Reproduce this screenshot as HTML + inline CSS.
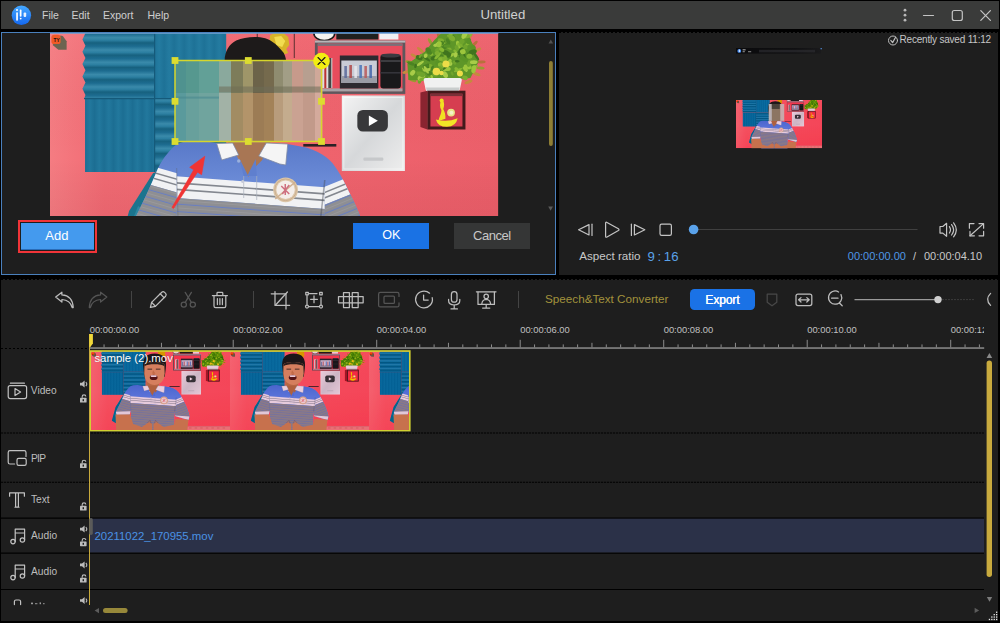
<!DOCTYPE html>
<html lang="en">
<head>
<meta charset="utf-8">
<title>Untitled</title>
<style>
html,body{margin:0;padding:0;}
body{width:1000px;height:623px;background:#000;overflow:hidden;position:relative;font-family:"Liberation Sans",sans-serif;color:#c8c8c8;}
.abs{position:absolute;}
.t{position:absolute;white-space:nowrap;line-height:1;}
#titlebar{left:1px;top:1px;width:998px;height:28px;background:#3a3b3a;}
#lpanel{left:1px;top:32px;width:555px;height:243px;background:#1e1e1e;box-sizing:border-box;border:1px solid #4a80bd;}
#rpanel{left:559px;top:32px;width:439px;height:243px;background:#1e1e1e;}
#lower{left:1px;top:279px;width:997px;height:342px;background:#1e1e1e;}
.menu{font-size:10.5px;color:#cfcfcf;top:10px;}
.sep{position:absolute;width:1px;background:#444;top:291px;height:17px;}
.rowline{position:absolute;left:1px;width:983px;height:1px;background:#000;}
.lbl{font-size:10.2px;color:#bdbdbd;}
svg{position:absolute;overflow:visible;}
.ic{fill:none;stroke:#bdbdbd;stroke-width:1.3;stroke-linecap:round;stroke-linejoin:round;}
.dim{stroke:#555;}
</style>
</head>
<body>
<!-- SCENE SYMBOLS -->
<svg width="0" height="0" style="position:absolute">
<defs>

<linearGradient id="wall" x1="50" y1="0" x2="498" y2="0" gradientUnits="userSpaceOnUse"><stop offset="0" stop-color="#f57c82"/><stop offset=".12" stop-color="#f16a73"/><stop offset=".6" stop-color="#ef636d"/><stop offset="1" stop-color="#ec5f6a"/></linearGradient>
<linearGradient id="wallv" x1="0" y1="33" x2="0" y2="285" gradientUnits="userSpaceOnUse"><stop offset="0" stop-color="#fff" stop-opacity=".04"/><stop offset=".5" stop-color="#000" stop-opacity="0"/><stop offset="1" stop-color="#a00020" stop-opacity=".12"/></linearGradient>
<linearGradient id="hs" x1="0" y1="34" x2="0" y2="46.3" gradientUnits="userSpaceOnUse" spreadMethod="repeat">
 <stop offset="0" stop-color="#1d6c90"/><stop offset=".3" stop-color="#3a8aaa"/><stop offset=".5" stop-color="#2c7fa1"/><stop offset=".72" stop-color="#17617f"/><stop offset="1" stop-color="#1d6c90"/>
</linearGradient>
<linearGradient id="vs" x1="85" y1="0" x2="94.5" y2="0" gradientUnits="userSpaceOnUse" spreadMethod="repeat">
 <stop offset="0" stop-color="#1c6e93"/><stop offset=".5" stop-color="#22789d"/><stop offset="1" stop-color="#1c6e93"/>
</linearGradient>
<linearGradient id="vs2" x1="154" y1="0" x2="164" y2="0" gradientUnits="userSpaceOnUse" spreadMethod="repeat">
 <stop offset="0" stop-color="#1e7297"/><stop offset=".5" stop-color="#247ba0"/><stop offset="1" stop-color="#1e7297"/>
</linearGradient>
<linearGradient id="plq" x1="0" y1="0" x2="1" y2="1"><stop offset="0" stop-color="#f4f4f4"/><stop offset=".5" stop-color="#d6d8da"/><stop offset="1" stop-color="#eeeeee"/></linearGradient>
<linearGradient id="shirtb" x1="0" y1="140" x2="0" y2="180" gradientUnits="userSpaceOnUse"><stop offset="0" stop-color="#5878c8"/><stop offset="1" stop-color="#6a8ad6"/></linearGradient>
<pattern id="whst" x="0" y="176" width="10" height="7.3" patternUnits="userSpaceOnUse"><rect width="10" height="7.3" fill="#f0f1f3"/><rect y="5.6" width="10" height="1.7" fill="#868a94"/></pattern>
<pattern id="grst" x="0" y="198" width="10" height="7.4" patternUnits="userSpaceOnUse"><rect width="10" height="7.4" fill="#8f8f92"/><rect y="5.4" width="10" height="1.1" fill="#6a7fc0"/><rect y="2" width="10" height=".8" fill="#9a9a9e"/></pattern>
<filter id="b1" x="-5%" y="-5%" width="110%" height="110%"><feGaussianBlur stdDeviation="0.7"/></filter>
<filter id="b2" x="-10%" y="-10%" width="120%" height="120%"><feGaussianBlur stdDeviation="1.6"/></filter>
<filter id="sat" x="0" y="0" width="100%" height="100%" color-interpolation-filters="sRGB"><feColorMatrix type="saturate" values="1.35"/><feComponentTransfer><feFuncR type="linear" slope=".96"/><feFuncG type="linear" slope=".84"/><feFuncB type="linear" slope=".9"/></feComponentTransfer></filter>
<clipPath id="bodyclip"><path d="M216 143L200 140.5L186 141L177 144C170 149 163 158 158 168C153 180 146 196 138 212L130 228L133 237L175 236L178 218L182 290L318 290L318 224L321 240L364 253L368 242C363 222 356 205 348.7 192C345 184 341 176 337 170C332 161 322 152 306 147.5L287 144L268 144L248 177L230 144Z"/></clipPath>
<clipPath id="lsleeve"><rect x="100" y="130" width="76.5" height="170"/></clipPath>
<clipPath id="rsleeve"><rect x="324.5" y="130" width="90" height="170"/></clipPath>
<clipPath id="chest"><rect x="176.5" y="130" width="148" height="170"/></clipPath>

<symbol id="scene-bg" viewBox="50 33 448 252" preserveAspectRatio="none">
 <rect x="50" y="33" width="448" height="252" fill="url(#wall)"/>
 <rect x="50" y="33" width="448" height="252" fill="url(#wallv)"/>
 <!-- acoustic panels -->
 <path d="M85.4 33L82.4 39.5L85.4 45.7L82.4 51.8L85.4 58.0L82.4 64.1L85.4 70.3L82.4 76.4L85.4 82.6L82.4 88.7L85.4 94.9L84 99L154.5 99L154.5 33Z" fill="url(#hs)"/>
 <rect x="154.5" y="33" width="71.5" height="65" fill="url(#vs2)"/>
 <rect x="85" y="99" width="69.5" height="73" fill="url(#vs)"/>
 <rect x="154.5" y="98" width="71.5" height="74" fill="url(#hs)"/>
 <path d="M154.5 33V172" stroke="#155a7a" stroke-width="1.2"/>
 <path d="M84 98.6H226" stroke="#155a7a" stroke-width="1.2"/>
 <!-- TY logo -->
 <path d="M53.6 43.6L60.4 35.6L62.8 36L66.6 41.2V49.8H58.4L52.6 45Z" fill="#6c6450"/>
 <rect x="51.4" y="34.8" width="9.2" height="9.2" rx="2.6" fill="#f05a26"/>
 <text x="53.6" y="42.4" font-family="Liberation Sans,sans-serif" font-size="4.8" font-weight="bold" fill="#1a0c0c">TY</text>
 <!-- things on top -->
 <ellipse cx="324" cy="33" rx="10.5" ry="7.5" fill="#f4f4f0" stroke="#1c1c1c" stroke-width="1.6"/>
 <rect x="336" y="33" width="42" height="6.5" fill="#20201e"/>
 <rect x="379" y="33" width="19" height="6.5" fill="#f0f0f2"/>
 <!-- shelf box -->
 <rect x="316" y="42" width="87.5" height="50.5" fill="#e84c5c" stroke="#5e575c" stroke-width="2.8"/>
 <rect x="314.6" y="40.6" width="90.3" height="2" fill="#b8b4b8"/>
 <rect x="317.5" y="43.5" width="84.5" height="2.4" fill="#7a7078"/>
 <rect x="317.4" y="88.4" width="84.6" height="3" fill="#a8a2a6"/>
 <rect x="321" y="58" width="11" height="30" fill="#ddd"/><rect x="324" y="60" width="2" height="28" fill="#b33"/><rect x="328" y="58" width="3" height="30" fill="#444"/>
 <rect x="339.5" y="55.5" width="38.5" height="33" fill="#2c2a30"/>
 <rect x="341" y="60.5" width="35.5" height="22.5" fill="#c9ccd6"/><rect x="341" y="76" width="35.5" height="7" fill="#9a9ca6"/>
 <g fill="#5a6a9a" opacity=".85"><rect x="344" y="66" width="2.6" height="12"/><rect x="349" y="65" width="2.6" height="13" fill="#b04848"/><rect x="354" y="66" width="2.6" height="12" fill="#e8e8ee"/><rect x="359" y="65" width="2.6" height="13" fill="#4a74b8"/><rect x="364" y="66" width="2.6" height="12" fill="#b85a5a"/><rect x="369" y="65" width="2.6" height="13" fill="#4466aa"/></g>
 <rect x="380" y="54.5" width="20.5" height="34" rx="3" fill="#19191b"/><rect x="380" y="60" width="20.5" height="2" fill="#3c3c40"/><rect x="380" y="72" width="20.5" height="1.6" fill="#34343a"/><ellipse cx="390.2" cy="55.5" rx="10" ry="2" fill="#3a3a40"/>
 <!-- small black shelf -->
 <rect x="303" y="144" width="33" height="2.6" fill="#2a2226"/>
 <!-- plaque -->
 <rect x="341.5" y="95.5" width="63" height="75.5" fill="url(#plq)"/>
 <rect x="343.5" y="97.5" width="59" height="71.5" fill="none" stroke="#fff" stroke-opacity=".5" stroke-width="1"/>
 <rect x="357" y="110" width="30.5" height="21.5" rx="5.5" fill="#38383a"/>
 <path d="M368.5 115.5v10.6l9 -5.3z" fill="#fff"/>
 <rect x="363" y="157.5" width="20" height="3.2" rx="1.2" fill="#c6c8ca"/>
 <!-- plant -->
 <ellipse cx="409" cy="62" rx="4.2" ry="1.5" transform="rotate(10 409 62)" fill="#9a9a30"/><ellipse cx="406" cy="72" rx="4.2" ry="1.5" transform="rotate(-15 406 72)" fill="#c48a3e"/><ellipse cx="412" cy="80" rx="4.2" ry="1.5" transform="rotate(20 412 80)" fill="#9a9a30"/><ellipse cx="420" cy="50" rx="4.2" ry="1.5" transform="rotate(40 420 50)" fill="#c48a3e"/><ellipse cx="430" cy="42" rx="4.2" ry="1.5" transform="rotate(60 430 42)" fill="#9a9a30"/><ellipse cx="438" cy="35" rx="4.2" ry="1.5" transform="rotate(80 438 35)" fill="#b8703c"/><ellipse cx="470" cy="36" rx="4.2" ry="1.5" transform="rotate(120 470 36)" fill="#c48a3e"/><ellipse cx="477" cy="50" rx="4.2" ry="1.5" transform="rotate(150 477 50)" fill="#c48a3e"/><ellipse cx="481" cy="62" rx="4.2" ry="1.5" transform="rotate(175 481 62)" fill="#b8703c"/><ellipse cx="476" cy="74" rx="4.2" ry="1.5" transform="rotate(200 476 74)" fill="#c48a3e"/><ellipse cx="468" cy="82" rx="4.2" ry="1.5" transform="rotate(160 468 82)" fill="#c48a3e"/><ellipse cx="414" cy="56" rx="4.2" ry="1.5" transform="rotate(30 414 56)" fill="#c48a3e"/><ellipse cx="474" cy="44" rx="4.2" ry="1.5" transform="rotate(135 474 44)" fill="#b8703c"/><ellipse cx="480" cy="68" rx="4.2" ry="1.5" transform="rotate(185 480 68)" fill="#9a9a30"/>
 <polygon points="441,33 467,33 474,48 478,62 470,78 440,81 408,80 407,64 424,52 434,40" fill="#5e9628"/>
 <ellipse cx="438.9" cy="60.0" rx="4.4" ry="1.9" transform="rotate(130 438.9 60.0)" fill="#5a9426"/><ellipse cx="418.8" cy="57.6" rx="3.6" ry="2.3" transform="rotate(24 418.8 57.6)" fill="#3f741e"/><ellipse cx="465.7" cy="66.7" rx="2.1" ry="2.6" transform="rotate(115 465.7 66.7)" fill="#9cc63c"/><ellipse cx="451.7" cy="73.6" rx="2.2" ry="1.2" transform="rotate(61 451.7 73.6)" fill="#6fa42c"/><ellipse cx="463.4" cy="48.3" rx="3.5" ry="1.5" transform="rotate(59 463.4 48.3)" fill="#4b8422"/><ellipse cx="442.5" cy="65.1" rx="3.2" ry="1.6" transform="rotate(141 442.5 65.1)" fill="#86b833"/><ellipse cx="458.1" cy="47.8" rx="2.6" ry="1.6" transform="rotate(17 458.1 47.8)" fill="#86b833"/><ellipse cx="435.0" cy="74.3" rx="3.0" ry="2.5" transform="rotate(175 435.0 74.3)" fill="#6fa42c"/><ellipse cx="421.0" cy="78.4" rx="2.1" ry="1.7" transform="rotate(101 421.0 78.4)" fill="#7cae30"/><ellipse cx="410.5" cy="63.5" rx="4.0" ry="1.6" transform="rotate(22 410.5 63.5)" fill="#4b8422"/><ellipse cx="429.9" cy="80.2" rx="4.0" ry="1.4" transform="rotate(63 429.9 80.2)" fill="#86b833"/><ellipse cx="441.5" cy="66.1" rx="2.5" ry="1.9" transform="rotate(33 441.5 66.1)" fill="#7cae30"/><ellipse cx="453.3" cy="37.8" rx="3.1" ry="1.5" transform="rotate(69 453.3 37.8)" fill="#4b8422"/><ellipse cx="450.2" cy="60.8" rx="2.1" ry="1.4" transform="rotate(113 450.2 60.8)" fill="#4b8422"/><ellipse cx="467.3" cy="51.3" rx="2.2" ry="1.5" transform="rotate(162 467.3 51.3)" fill="#5a9426"/><ellipse cx="451.7" cy="38.4" rx="3.5" ry="2.4" transform="rotate(34 451.7 38.4)" fill="#7cae30"/><ellipse cx="419.7" cy="79.5" rx="4.3" ry="2.0" transform="rotate(107 419.7 79.5)" fill="#6fa42c"/><ellipse cx="457.8" cy="44.8" rx="4.1" ry="2.0" transform="rotate(75 457.8 44.8)" fill="#9cc63c"/><ellipse cx="454.0" cy="62.8" rx="2.2" ry="1.5" transform="rotate(52 454.0 62.8)" fill="#6fa42c"/><ellipse cx="426.1" cy="58.6" rx="4.5" ry="1.3" transform="rotate(35 426.1 58.6)" fill="#3f741e"/><ellipse cx="456.8" cy="61.2" rx="2.4" ry="1.2" transform="rotate(4 456.8 61.2)" fill="#3f741e"/><ellipse cx="473.3" cy="67.0" rx="4.5" ry="1.2" transform="rotate(162 473.3 67.0)" fill="#86b833"/><ellipse cx="441.2" cy="68.5" rx="2.8" ry="2.6" transform="rotate(19 441.2 68.5)" fill="#3f741e"/><ellipse cx="446.0" cy="68.9" rx="4.3" ry="2.2" transform="rotate(180 446.0 68.9)" fill="#9cc63c"/><ellipse cx="464.5" cy="77.8" rx="2.9" ry="2.2" transform="rotate(19 464.5 77.8)" fill="#7cae30"/><ellipse cx="454.7" cy="51.0" rx="2.0" ry="1.3" transform="rotate(23 454.7 51.0)" fill="#86b833"/><ellipse cx="459.6" cy="51.4" rx="3.9" ry="2.0" transform="rotate(112 459.6 51.4)" fill="#3f741e"/><ellipse cx="467.9" cy="36.2" rx="4.0" ry="1.2" transform="rotate(153 467.9 36.2)" fill="#86b833"/><ellipse cx="441.1" cy="43.5" rx="3.8" ry="1.9" transform="rotate(157 441.1 43.5)" fill="#3f741e"/><ellipse cx="427.6" cy="65.9" rx="2.5" ry="1.4" transform="rotate(87 427.6 65.9)" fill="#3f741e"/><ellipse cx="442.4" cy="44.1" rx="3.1" ry="1.6" transform="rotate(162 442.4 44.1)" fill="#7cae30"/><ellipse cx="465.3" cy="69.7" rx="2.5" ry="1.5" transform="rotate(56 465.3 69.7)" fill="#a8cc48"/><ellipse cx="431.3" cy="76.8" rx="2.1" ry="1.3" transform="rotate(70 431.3 76.8)" fill="#9cc63c"/><ellipse cx="433.7" cy="58.0" rx="3.7" ry="2.2" transform="rotate(159 433.7 58.0)" fill="#3f741e"/><ellipse cx="429.0" cy="73.4" rx="2.7" ry="2.1" transform="rotate(173 429.0 73.4)" fill="#4b8422"/><ellipse cx="447.8" cy="47.5" rx="4.1" ry="1.2" transform="rotate(34 447.8 47.5)" fill="#7cae30"/><ellipse cx="467.2" cy="43.9" rx="2.4" ry="1.3" transform="rotate(161 467.2 43.9)" fill="#86b833"/><ellipse cx="438.5" cy="63.5" rx="3.7" ry="2.3" transform="rotate(19 438.5 63.5)" fill="#5a9426"/><ellipse cx="420.0" cy="55.8" rx="2.5" ry="1.2" transform="rotate(120 420.0 55.8)" fill="#6fa42c"/><ellipse cx="430.9" cy="66.9" rx="3.4" ry="2.1" transform="rotate(40 430.9 66.9)" fill="#7cae30"/><ellipse cx="468.7" cy="67.0" rx="2.6" ry="1.8" transform="rotate(99 468.7 67.0)" fill="#9cc63c"/><ellipse cx="438.8" cy="41.8" rx="4.3" ry="1.2" transform="rotate(140 438.8 41.8)" fill="#a8cc48"/><ellipse cx="439.8" cy="64.6" rx="2.5" ry="2.2" transform="rotate(164 439.8 64.6)" fill="#86b833"/><ellipse cx="421.0" cy="77.0" rx="4.5" ry="2.6" transform="rotate(137 421.0 77.0)" fill="#a8cc48"/><ellipse cx="424.6" cy="67.9" rx="2.0" ry="1.9" transform="rotate(9 424.6 67.9)" fill="#3f741e"/><ellipse cx="430.7" cy="53.1" rx="2.7" ry="2.5" transform="rotate(55 430.7 53.1)" fill="#86b833"/><ellipse cx="445.0" cy="66.3" rx="4.4" ry="1.9" transform="rotate(132 445.0 66.3)" fill="#3f741e"/><ellipse cx="475.9" cy="56.6" rx="4.5" ry="1.3" transform="rotate(56 475.9 56.6)" fill="#3f741e"/><ellipse cx="444.5" cy="46.5" rx="3.9" ry="2.1" transform="rotate(133 444.5 46.5)" fill="#4b8422"/><ellipse cx="428.4" cy="51.1" rx="4.2" ry="2.5" transform="rotate(53 428.4 51.1)" fill="#4b8422"/><ellipse cx="444.3" cy="60.6" rx="2.5" ry="2.0" transform="rotate(128 444.3 60.6)" fill="#6fa42c"/><ellipse cx="450.4" cy="33.4" rx="4.5" ry="1.9" transform="rotate(102 450.4 33.4)" fill="#86b833"/><ellipse cx="441.8" cy="66.5" rx="2.2" ry="2.0" transform="rotate(105 441.8 66.5)" fill="#7cae30"/><ellipse cx="425.2" cy="55.7" rx="2.3" ry="1.8" transform="rotate(121 425.2 55.7)" fill="#a8cc48"/><ellipse cx="459.3" cy="44.2" rx="3.3" ry="1.9" transform="rotate(149 459.3 44.2)" fill="#86b833"/><ellipse cx="468.9" cy="63.2" rx="3.9" ry="2.2" transform="rotate(111 468.9 63.2)" fill="#6fa42c"/><ellipse cx="433.2" cy="52.7" rx="3.4" ry="1.4" transform="rotate(52 433.2 52.7)" fill="#5a9426"/><ellipse cx="444.7" cy="74.6" rx="3.6" ry="2.4" transform="rotate(59 444.7 74.6)" fill="#a8cc48"/><ellipse cx="472.7" cy="47.8" rx="2.8" ry="2.5" transform="rotate(55 472.7 47.8)" fill="#5a9426"/><ellipse cx="423.0" cy="68.3" rx="2.7" ry="1.3" transform="rotate(107 423.0 68.3)" fill="#9cc63c"/><ellipse cx="420.0" cy="63.4" rx="4.1" ry="1.3" transform="rotate(145 420.0 63.4)" fill="#a8cc48"/><ellipse cx="461.9" cy="57.1" rx="3.8" ry="1.5" transform="rotate(18 461.9 57.1)" fill="#3f741e"/><ellipse cx="446.4" cy="57.7" rx="3.5" ry="1.4" transform="rotate(47 446.4 57.7)" fill="#86b833"/><ellipse cx="420.3" cy="74.0" rx="4.6" ry="2.5" transform="rotate(24 420.3 74.0)" fill="#6fa42c"/><ellipse cx="415.1" cy="66.0" rx="2.2" ry="1.3" transform="rotate(100 415.1 66.0)" fill="#3f741e"/><ellipse cx="437.0" cy="49.7" rx="2.5" ry="1.7" transform="rotate(162 437.0 49.7)" fill="#6fa42c"/><ellipse cx="468.3" cy="41.1" rx="3.2" ry="2.2" transform="rotate(103 468.3 41.1)" fill="#5a9426"/><ellipse cx="450.4" cy="36.7" rx="4.1" ry="1.7" transform="rotate(21 450.4 36.7)" fill="#7cae30"/><ellipse cx="447.7" cy="41.5" rx="3.5" ry="1.7" transform="rotate(66 447.7 41.5)" fill="#4b8422"/><ellipse cx="473.3" cy="69.2" rx="4.0" ry="2.3" transform="rotate(103 473.3 69.2)" fill="#9cc63c"/><ellipse cx="457.1" cy="70.4" rx="4.0" ry="1.8" transform="rotate(47 457.1 70.4)" fill="#86b833"/><ellipse cx="464.8" cy="47.1" rx="2.3" ry="2.4" transform="rotate(163 464.8 47.1)" fill="#6fa42c"/><ellipse cx="422.4" cy="79.2" rx="3.7" ry="1.7" transform="rotate(168 422.4 79.2)" fill="#7cae30"/><ellipse cx="447.7" cy="58.7" rx="3.0" ry="2.6" transform="rotate(164 447.7 58.7)" fill="#5a9426"/><ellipse cx="457.6" cy="70.1" rx="4.5" ry="1.2" transform="rotate(157 457.6 70.1)" fill="#86b833"/><ellipse cx="460.4" cy="44.8" rx="3.0" ry="1.3" transform="rotate(50 460.4 44.8)" fill="#7cae30"/><ellipse cx="445.5" cy="52.8" rx="3.4" ry="2.4" transform="rotate(25 445.5 52.8)" fill="#3f741e"/><ellipse cx="465.7" cy="35.8" rx="3.6" ry="2.3" transform="rotate(11 465.7 35.8)" fill="#7cae30"/><ellipse cx="440.4" cy="40.5" rx="3.3" ry="2.1" transform="rotate(14 440.4 40.5)" fill="#7cae30"/><ellipse cx="444.5" cy="61.9" rx="3.0" ry="1.6" transform="rotate(167 444.5 61.9)" fill="#4b8422"/><ellipse cx="447.0" cy="46.2" rx="3.9" ry="1.6" transform="rotate(3 447.0 46.2)" fill="#5a9426"/><ellipse cx="448.9" cy="63.6" rx="3.1" ry="2.2" transform="rotate(13 448.9 63.6)" fill="#a8cc48"/><ellipse cx="461.1" cy="34.5" rx="4.6" ry="2.5" transform="rotate(18 461.1 34.5)" fill="#5a9426"/><ellipse cx="437.2" cy="55.9" rx="4.5" ry="1.5" transform="rotate(133 437.2 55.9)" fill="#86b833"/><ellipse cx="440.1" cy="80.9" rx="4.1" ry="2.0" transform="rotate(29 440.1 80.9)" fill="#6fa42c"/><ellipse cx="451.8" cy="54.8" rx="2.5" ry="1.3" transform="rotate(135 451.8 54.8)" fill="#9cc63c"/><ellipse cx="455.1" cy="54.8" rx="2.7" ry="2.0" transform="rotate(107 455.1 54.8)" fill="#a8cc48"/><ellipse cx="463.3" cy="58.5" rx="4.6" ry="2.5" transform="rotate(32 463.3 58.5)" fill="#5a9426"/><ellipse cx="441.1" cy="57.1" rx="2.8" ry="1.9" transform="rotate(91 441.1 57.1)" fill="#4b8422"/><ellipse cx="425.4" cy="66.3" rx="3.5" ry="2.0" transform="rotate(162 425.4 66.3)" fill="#4b8422"/><ellipse cx="461.5" cy="41.5" rx="2.6" ry="2.6" transform="rotate(50 461.5 41.5)" fill="#6fa42c"/><ellipse cx="425.9" cy="69.8" rx="4.4" ry="1.4" transform="rotate(60 425.9 69.8)" fill="#a8cc48"/><ellipse cx="441.3" cy="49.7" rx="2.9" ry="1.9" transform="rotate(34 441.3 49.7)" fill="#86b833"/><ellipse cx="465.2" cy="54.4" rx="4.1" ry="2.4" transform="rotate(54 465.2 54.4)" fill="#3f741e"/><ellipse cx="436.8" cy="44.9" rx="4.1" ry="1.7" transform="rotate(167 436.8 44.9)" fill="#a8cc48"/><ellipse cx="426.8" cy="69.9" rx="4.1" ry="1.5" transform="rotate(167 426.8 69.9)" fill="#a8cc48"/><ellipse cx="448.5" cy="55.1" rx="2.8" ry="2.0" transform="rotate(110 448.5 55.1)" fill="#3f741e"/><ellipse cx="466.1" cy="55.2" rx="4.1" ry="1.2" transform="rotate(79 466.1 55.2)" fill="#5a9426"/><ellipse cx="473.3" cy="62.2" rx="3.8" ry="1.9" transform="rotate(177 473.3 62.2)" fill="#a8cc48"/><ellipse cx="431.8" cy="68.3" rx="3.0" ry="1.4" transform="rotate(112 431.8 68.3)" fill="#4b8422"/><ellipse cx="437.8" cy="72.2" rx="2.8" ry="1.6" transform="rotate(102 437.8 72.2)" fill="#5a9426"/><ellipse cx="411.3" cy="73.4" rx="2.1" ry="2.1" transform="rotate(149 411.3 73.4)" fill="#7cae30"/><ellipse cx="464.7" cy="68.9" rx="3.0" ry="1.7" transform="rotate(39 464.7 68.9)" fill="#9cc63c"/><ellipse cx="418.2" cy="69.9" rx="4.3" ry="1.6" transform="rotate(5 418.2 69.9)" fill="#5a9426"/><ellipse cx="443.7" cy="59.2" rx="3.5" ry="2.6" transform="rotate(166 443.7 59.2)" fill="#7cae30"/><ellipse cx="464.1" cy="36.2" rx="2.2" ry="2.2" transform="rotate(80 464.1 36.2)" fill="#86b833"/><ellipse cx="412.3" cy="72.8" rx="3.1" ry="2.2" transform="rotate(125 412.3 72.8)" fill="#a8cc48"/><ellipse cx="462.4" cy="51.7" rx="2.9" ry="2.6" transform="rotate(172 462.4 51.7)" fill="#9cc63c"/><ellipse cx="442.0" cy="58.9" rx="3.9" ry="2.2" transform="rotate(11 442.0 58.9)" fill="#7cae30"/><ellipse cx="439.8" cy="59.1" rx="2.1" ry="1.7" transform="rotate(2 439.8 59.1)" fill="#86b833"/><ellipse cx="436.6" cy="53.0" rx="2.4" ry="2.2" transform="rotate(162 436.6 53.0)" fill="#7cae30"/><ellipse cx="456.3" cy="48.0" rx="3.0" ry="1.9" transform="rotate(70 456.3 48.0)" fill="#6fa42c"/><ellipse cx="440.4" cy="68.5" rx="2.8" ry="1.4" transform="rotate(45 440.4 68.5)" fill="#6fa42c"/><ellipse cx="441.1" cy="72.0" rx="2.8" ry="1.5" transform="rotate(91 441.1 72.0)" fill="#5a9426"/><ellipse cx="449.1" cy="62.0" rx="3.2" ry="1.9" transform="rotate(113 449.1 62.0)" fill="#9cc63c"/><ellipse cx="472.1" cy="52.1" rx="4.4" ry="2.5" transform="rotate(160 472.1 52.1)" fill="#3f741e"/><ellipse cx="469.0" cy="56.2" rx="3.0" ry="2.5" transform="rotate(169 469.0 56.2)" fill="#86b833"/><ellipse cx="441.2" cy="43.1" rx="2.1" ry="2.5" transform="rotate(98 441.2 43.1)" fill="#4b8422"/><ellipse cx="464.1" cy="34.9" rx="4.4" ry="2.4" transform="rotate(120 464.1 34.9)" fill="#a8cc48"/><ellipse cx="438.8" cy="44.3" rx="3.1" ry="2.4" transform="rotate(106 438.8 44.3)" fill="#9cc63c"/>
 <g fill="#ecdc48"><circle cx="445.5" cy="64" r="3.6"/><circle cx="436" cy="71.5" r="3.8"/><circle cx="459.5" cy="73.5" r="3"/><circle cx="441" cy="73" r="2.2"/></g>
 <path d="M423.2 80q0 -2 2 -2h34.2q2 0 2 2l-2 9.6q-.4 2 -2.4 2h-29.4q-2 0 -2.4 -2z" fill="#f0f1f1"/><path d="M425.6 87.5h33.6l-.6 2.4q-.4 1.7 -2.4 1.7h-27.6q-2 0 -2.4 -1.7z" fill="#c9cdcd"/>
 <!-- small box frame -->
 <path d="M420 92.5l7 -1.8v38.8l-7 -2.4z" fill="#8a2430"/>
 <rect x="428.5" y="92.2" width="35" height="35.8" fill="#d63e50" stroke="#431a1c" stroke-width="3"/>
 <rect x="430" y="93.7" width="32" height="2.4" fill="#7a3038"/>
 <path d="M438 121c1 -5 3 -7 3 -11c-2 -3 -1.6 -7 -.4 -9.6l2 0c1.8 3 1 6.4 .2 8.6c1.6 3 2.4 6 2.2 9.8z" fill="#f0e022"/><circle cx="441.2" cy="100.4" r="2" fill="#f0e022"/>
 <path d="M435.4 119.4q11 3.4 21.8 -1.2q-1.6 8.2 -10.6 8.6q-9 .2 -11.2 -7.4z" fill="#f2e426"/>
 <circle cx="450.6" cy="112.6" r="3.9" fill="#e8e486"/><circle cx="451" cy="112.8" r="2" fill="#f4f2c8"/>
 <!-- table bottom right -->
 <rect x="360" y="272" width="138" height="13" fill="#dc8c8a"/><rect x="360" y="272" width="138" height="1.6" fill="#c06a72"/>
 <g fill="#c8706e"><rect x="366" y="277" width="8" height="3"/><rect x="384" y="277" width="8" height="3"/><rect x="402" y="277" width="8" height="3"/><rect x="420" y="277" width="8" height="3"/><rect x="438" y="277" width="8" height="3"/><rect x="456" y="277" width="8" height="3"/><rect x="474" y="277" width="8" height="3"/></g>
</symbol>

<symbol id="man-body" viewBox="50 33 448 252" preserveAspectRatio="none">
 <!-- chair -->
 <path d="M153 173l12 -4l-2 30l-30 66l-16 -10l12 -44z" fill="#1b748e"/>
 <path d="M126 236l12 -30l6 4l-10 44z" fill="#2a88a2"/>
 <!-- neck -->
 <path d="M228 120h42v44l-22 14l-20-14z" fill="#b07e5c"/>
 <g clip-path="url(#bodyclip)">
  <rect x="120" y="136" width="260" height="160" fill="url(#shirtb)"/>
  <g clip-path="url(#chest)"><g transform="rotate(4.2 176 176.3)"><rect x="160" y="176.3" width="190" height="21.6" fill="#f1f2f4"/><rect x="160" y="182.1" width="190" height="1.6" fill="#83878f"/><rect x="160" y="188.6" width="190" height="1.6" fill="#83878f"/><rect x="160" y="197.9" width="190" height="110" fill="url(#grst)"/></g></g>
  <g clip-path="url(#lsleeve)"><g transform="rotate(16 176 173)"><rect x="110" y="173" width="90" height="18.5" fill="#f1f2f4"/><rect x="110" y="178.0" width="90" height="1.6" fill="#83878f"/><rect x="110" y="183.5" width="90" height="1.6" fill="#83878f"/><rect x="100" y="191.5" width="110" height="130" fill="url(#grst)"/></g></g>
  <g clip-path="url(#rsleeve)"><g transform="rotate(-22 325 186.5)"><rect x="300" y="186.5" width="90" height="16.6" fill="#f1f2f4"/><rect x="300" y="191.0" width="90" height="1.6" fill="#83878f"/><rect x="300" y="196.0" width="90" height="1.6" fill="#83878f"/><rect x="290" y="203.1" width="110" height="130" fill="url(#grst)"/></g></g>
  <path d="M126 226l52 -1l-2 11l-48 1z" fill="#eceef0"/>
  <path d="M320 238l48 4l-2 11l-46 -4z" fill="#eceef0"/>
  <path d="M176.5 168L178 222" stroke="#5f6570" stroke-width="1.1" fill="none" opacity=".35"/>
  <path d="M324.5 180l-5 46" stroke="#4a4e58" stroke-width="1.5" fill="none" opacity=".45"/>
 </g>
 <!-- arms -->
 <path d="M129 235L176 235L186 266L214 275.5L237.4 259L247 266L247 286L131 286Z" fill="#c08a66"/>
 <path d="M322 250L364.5 252L360 286L251.5 286L251.5 266L261 259L284.5 275.5L317 268Z" fill="#c08a66"/>
 <path d="M232 262l8 -8l4 10M266 262l-8 -8l-4 10" stroke="#8a5a40" stroke-width="1.2" fill="none"/>
 <!-- neck V + collar -->
 <path d="M231 143L267 143L262 160L247 175L240 160Z" fill="#a87654"/>
 <path d="M216.5 143.5l16 -.5l6 12l-17 5z" fill="#f5f5f5" stroke="#7f89a2" stroke-width=".8"/>
 <path d="M266 143l21.5 1l-2 21l-6 -1l-21 -8z" fill="#f5f5f5" stroke="#7f89a2" stroke-width=".8"/>
 <path d="M239 158l8.5 17l8 -16l1 17l-13 0z" fill="#5f7fce"/><path d="M243.5 176v22M256.5 176v24" stroke="#aab0bc" stroke-width=".7" fill="none"/>
 <circle cx="238.5" cy="161" r="1.7" fill="#9ab0dc"/><circle cx="242.5" cy="181.5" r="1.6" fill="#c8ccd8"/>
 <!-- badge -->
 <circle cx="285.3" cy="189.8" r="12.4" fill="#dcc6a8"/><circle cx="285.3" cy="189.8" r="9.2" fill="#f4eeea"/>
 <circle cx="285.3" cy="189.8" r="10.8" fill="none" stroke="#c8a888" stroke-width=".8"/>
 <path d="M275 199l20 -17" stroke="#d0b090" stroke-width="1.6" fill="none"/><path d="M281 186l8 8M289 185l-7 9M285 184v11" stroke="#cf7080" stroke-width="1.5" fill="none"/>
</symbol>

<symbol id="head-a" viewBox="50 33 448 252" preserveAspectRatio="none">
 <path d="M257 33v11M294 33v25" stroke="#5a3030" stroke-width="1" fill="none"/>
 <path d="M270 35l5 -2h8l5 4l1 8l-3 4l2 4l-6 2l-4 -4l-6 -2l-3 -7z" fill="#d8b428"/><path d="M274 37l7 -1l4 5l-3 6l-6 -2z" fill="#f2dc50"/>
 <path d="M224.5 62C224 52 229 44 236 40.5C244 37 256 36 265 38.2C272 40 279 47 283.5 53C285.5 57 286 60 286 64L289 126h-62z" fill="#1d1a1a"/>
 <path d="M232 78c6 -10 40 -12 54 0l-3 52c-6 12 -40 12 -47 0z" fill="#b48462"/>
</symbol>

<symbol id="head-b" viewBox="50 33 448 252" preserveAspectRatio="none">
 <path d="M266 33h22l2 10l-4 10l-10 2l-8 -8z" fill="#d4b020"/>
 <path d="M219 88c-5 -34 8 -49 36 -49c28 0 41 15 36 49l-3 26h-66z" fill="#1d1b1b"/>
 <path d="M222.5 74c8 -10 55 -10 64 0l1 30c-2 48 -64 48 -66 0z" fill="#cf9a78"/>
 <path d="M222.5 74c8 -10 55 -10 64 0l0 6c-12 -8 -52 -8 -64 0z" fill="#2a2422"/>
 <ellipse cx="252" cy="116" rx="12.5" ry="8.5" fill="#4a1a1c"/><rect x="242" y="109" width="20" height="5.4" rx="2.6" fill="#f6f2f2"/>
 <rect x="232" y="88" width="15" height="2.6" fill="#2a2020"/><rect x="259" y="88" width="15" height="2.6" fill="#2a2020"/>
 <path d="M250 93l-3 11h11z" fill="#b8805e"/>
</symbol>
</defs>
</svg>

<!-- TITLE BAR -->
<div id="titlebar" class="abs"></div>

<svg class="abs" style="left:11px;top:5px" width="21" height="21" viewBox="0 0 21 21">
 <defs><linearGradient id="lg1" x1="0" y1="0" x2="0" y2="1"><stop offset="0" stop-color="#45a8ff"/><stop offset="1" stop-color="#1468f0"/></linearGradient></defs>
 <circle cx="10.4" cy="10.3" r="9.7" fill="url(#lg1)"/>
 <rect x="5.2" y="7.2" width="1.7" height="8.6" rx=".8" fill="#fff"/><circle cx="6" cy="5" r="1" fill="#fff"/>
 <rect x="8.8" y="4.6" width="1.7" height="7.2" rx=".8" fill="#fff"/><circle cx="9.7" cy="13.6" r=".9" fill="#fff"/>
 <rect x="12.6" y="7.4" width="2.6" height="4.6" rx="1" fill="#e8f2ff"/>
</svg>
<span class="t menu" style="left:42px">File</span>
<span class="t menu" style="left:71.5px">Edit</span>
<span class="t menu" style="left:103px">Export</span>
<span class="t menu" style="left:147.5px">Help</span>
<span class="t" style="left:480.5px;top:8px;font-size:13.2px;color:#d0d0d0">Untitled</span>
<svg class="abs" style="left:895px;top:4px" width="100" height="22" viewBox="895 4 100 22">
 <g fill="#b8b8b8"><circle cx="905" cy="10.2" r="1.4"/><circle cx="905" cy="15.2" r="1.4"/><circle cx="905" cy="20.2" r="1.4"/></g>
 <g class="ic" style="stroke:#c4c4c4;stroke-width:1.2"><path d="M923.5 15.5H933.5"/><rect x="952.3" y="10.5" width="10" height="10" rx="2"/><path d="M980.8 10.6l9.6 9.8M990.4 10.6l-9.6 9.8"/></g>
</svg>


<!-- LEFT PANEL -->
<div id="lpanel" class="abs"></div>

<svg class="abs" style="left:50px;top:33px" width="448.5" height="183" viewBox="50 33 448.5 183">
 <defs><clipPath id="pvclip"><rect x="50" y="33" width="448.5" height="183"/></clipPath></defs>
 <g clip-path="url(#pvclip)">
  <use href="#scene-bg" x="50" y="33" width="448.5" height="252"/>
  <use href="#head-a" x="50" y="33" width="448.5" height="252"/>
  <use href="#man-body" x="50" y="33" width="448.5" height="252"/>
  <rect x="50" y="33" width="448.5" height="1" fill="#6fa0d0" opacity=".8"/>
  <g filter="url(#b1)"><rect x="175" y="60.5" width="11.3" height="33" fill="#4f928f"/><rect x="175" y="93" width="11.3" height="49" fill="#5a9a9c"/><rect x="186" y="60.5" width="13.3" height="33" fill="#57988f"/><rect x="186" y="93" width="13.3" height="49" fill="#68a09c"/><rect x="199" y="60.5" width="20.3" height="33" fill="#62a097"/><rect x="199" y="93" width="20.3" height="49" fill="#70a49e"/><rect x="219" y="60.5" width="12.3" height="33" fill="#8aa99d"/><rect x="219" y="93" width="12.3" height="49" fill="#a2b2a6"/><rect x="231" y="60.5" width="12.3" height="33" fill="#7d7c5a"/><rect x="231" y="93" width="12.3" height="49" fill="#a28c64"/><rect x="243" y="60.5" width="10.3" height="33" fill="#9f9669"/><rect x="243" y="93" width="10.3" height="49" fill="#b3946b"/><rect x="253" y="60.5" width="11.3" height="33" fill="#6c6349"/><rect x="253" y="93" width="11.3" height="49" fill="#9c7c54"/><rect x="264" y="60.5" width="10.3" height="33" fill="#756a4e"/><rect x="264" y="93" width="10.3" height="49" fill="#a38258"/><rect x="274" y="60.5" width="9.3" height="33" fill="#8f8c70"/><rect x="274" y="93" width="9.3" height="49" fill="#b89c7c"/><rect x="283" y="60.5" width="9.3" height="33" fill="#a29e86"/><rect x="283" y="93" width="9.3" height="49" fill="#c4ac8e"/><rect x="292" y="60.5" width="11.3" height="33" fill="#c79a8b"/><rect x="292" y="93" width="11.3" height="49" fill="#caa292"/><rect x="303" y="60.5" width="12.3" height="33" fill="#b79f90"/><rect x="303" y="93" width="12.3" height="49" fill="#c29a8a"/><rect x="315" y="60.5" width="7.3" height="33" fill="#d0a899"/><rect x="315" y="93" width="7.3" height="49" fill="#d4aa9c"/><rect x="219" y="86.5" width="103" height="6" fill="#6e6c56" opacity=".55"/><rect x="175" y="96.6" width="44" height="2" fill="#4a8890" opacity=".6"/></g>
  
  <rect x="175" y="60.5" width="146.5" height="81" fill="none" stroke="#d6d62c" stroke-width="1.5"/>
  <rect x="171.6" y="57.1" width="6.8" height="6.8" fill="#dcdc30"/><rect x="244.9" y="57.1" width="6.8" height="6.8" fill="#dcdc30"/><rect x="171.6" y="97.89999999999999" width="6.8" height="6.8" fill="#dcdc30"/><rect x="318.1" y="97.89999999999999" width="6.8" height="6.8" fill="#dcdc30"/><rect x="171.6" y="138.1" width="6.8" height="6.8" fill="#dcdc30"/><rect x="244.9" y="138.1" width="6.8" height="6.8" fill="#dcdc30"/><rect x="318.1" y="138.1" width="6.8" height="6.8" fill="#dcdc30"/>
  <circle cx="321.5" cy="61" r="8.3" fill="#f2ee12"/>
  <path d="M318 57.5l7 7M325 57.5l-7 7" stroke="#1a1a1a" stroke-width="1.15" stroke-linecap="round"/>
  <path d="M171.9 207.6L193.7 169.8L189.7 167.3L204.8 156.2L201.6 174.7L197.5 172.2L173.5 208.6Z" fill="#f03434" stroke="#f03434" stroke-width=".6" stroke-linejoin="round"/>
 </g>
</svg>
<!-- scrollbar -->
<svg class="abs" style="left:545px;top:36px" width="10" height="180" viewBox="545 36 10 180">
 <path d="M548.5 43.5l2.3 -4l2.3 4z" fill="#505050"/>
 <rect x="549" y="61" width="3.8" height="85" rx="1.9" fill="#8e7e34"/>
 <path d="M548.2 206.5l2.4 4.2l2.4 -4.2z" fill="#5a5a5a"/>
</svg>
<!-- buttons -->
<div class="abs" style="left:18px;top:219.5px;width:79px;height:33.5px;box-sizing:border-box;border:2.6px solid #f03438;background:#1e1e1e"></div>
<div class="abs" style="left:21px;top:222.5px;width:73.3px;height:27px;background:#449aee;border-bottom:1px solid #2a6cb8;box-sizing:border-box"></div>
<span class="t" style="left:45.3px;top:229.2px;font-size:13px;color:#fff">Add</span>
<div class="abs" style="left:353px;top:223px;width:76px;height:26px;background:#1a72e4"></div>
<span class="t" style="left:382.3px;top:229px;font-size:12.6px;color:#fff">OK</span>
<div class="abs" style="left:453.5px;top:223px;width:76.5px;height:26px;background:#353636"></div>
<span class="t" style="left:473px;top:229px;font-size:13px;letter-spacing:-.45px;color:#c8c8c8">Cancel</span>


<!-- RIGHT PANEL -->
<div id="rpanel" class="abs"></div>

<!-- dotted top edge -->
<div class="abs" style="left:559px;top:32px;width:439px;height:1px;background:repeating-linear-gradient(90deg,#000 0 2px,#1e1e1e 2px 4px)"></div>
<svg class="abs" style="left:886px;top:34px" width="14" height="14" viewBox="886 34 14 14">
 <circle cx="893" cy="40.5" r="4.5" class="ic" style="stroke-width:1"/><path d="M890.8 40.4l1.8 2.2l3 -5.4" class="ic" style="stroke-width:1.2"/>
</svg>
<span class="t" style="left:899.5px;top:35px;font-size:10px;letter-spacing:-.2px;color:#c6c6c6">Recently saved 11:12</span>
<!-- tiny caption strip -->
<svg class="abs" style="left:736px;top:46.7px" width="88" height="8" viewBox="735 46 88 8">
 <defs><linearGradient id="capg" x1="0" x2="1"><stop offset="0" stop-color="#0a0a0c"/><stop offset=".7" stop-color="#101012"/><stop offset="1" stop-color="#1a1a1c"/></linearGradient></defs>
 <rect x="735" y="47" width="85" height="5.6" fill="url(#capg)"/>
 <circle cx="738.3" cy="49.9" r="1.9" fill="#4a8ef0"/><rect x="737.9" y="48.6" width=".8" height="2.4" fill="#fff"/>
 <rect x="741.6" y="48.4" width="3" height=".9" fill="#ccc"/><rect x="741.6" y="50.3" width="2.2" height=".9" fill="#aaa"/><rect x="747" y="50.3" width="3.2" height=".9" fill="#999"/>
 <rect x="758" y="48.8" width="56" height="2.6" fill="#2c2c30" opacity=".7"/>
 <rect x="819.6" y="47" width="1.1" height="1.3" fill="#5a9af0"/>
</svg>
<!-- small preview -->
<svg class="abs" style="left:736px;top:99.8px" width="86" height="48.2" viewBox="735 99 86.5 48.5" preserveAspectRatio="none">
 <g filter="url(#sat)"><use href="#scene-bg" x="735" y="99" width="86.5" height="48.5"/>
 <use href="#man-body" x="735" y="99" width="86.5" height="48.5"/><use href="#head-b" x="735" y="99" width="86.5" height="48.5"/></g>
 <g filter="url(#b1)"><rect x="768" y="103" width="14" height="17" fill="#8c7462"/><rect x="768" y="103" width="3" height="17" fill="#b9b0b4"/><rect x="779.5" y="103" width="4" height="17" fill="#c8a8aa"/><rect x="771" y="103" width="8" height="5" fill="#4a4038"/></g>
</svg>
<!-- player controls -->
<svg class="abs" style="left:570px;top:218px" width="425" height="24" viewBox="570 218 425 24">
 <g class="ic" style="stroke:#c4c4c4;stroke-width:1.2">
  <path d="M589 224.6v10.4l-10.4 -5.2z"/><path d="M592 224.2v11.2"/>
  <path d="M605.6 223.2q0 -1.6 1.4 -.8l11.4 6.4q1.2 .9 0 1.7l-11.4 6.5q-1.4 .8 -1.4 -.8z"/>
  <path d="M634.4 224.6v10.4l10.4 -5.2z"/><path d="M631.4 224.2v11.2"/>
  <rect x="660" y="224.2" width="11.4" height="11.2" rx="1.6"/>
  <!-- volume -->
  <path d="M946.6 223.3v13l-3.8 -3.2h-2.8v-6.6h2.8z"/>
  <path d="M949.4 226.6q2.2 3.2 0 6.4"/><path d="M951.6 224.6q4 5.2 0 10.4"/><path d="M953.6 222.8q5.4 7 0 14"/>
  <!-- fullscreen -->
  <path d="M974 223.6h-4.6v4.6"/><path d="M979 223.6h4.6v4.6l-0 -4.6l-13.6 12.2"/><path d="M970 231.4v4.4h4.4"/><path d="M983.6 231.4v4.4h-4.6"/>
 </g>
 <path d="M698 229.5H917.5" stroke="#404040" stroke-width="1"/>
 <circle cx="693.6" cy="229.5" r="4.8" fill="#5aa2ea"/>
</svg>
<span class="t" style="left:579.3px;top:249.8px;font-size:11.6px;color:#c8c8c8">Aspect ratio</span>
<span class="t" style="left:647.5px;top:250px;font-size:13.2px;color:#5aa2ea;word-spacing:-1px">9 : 16</span>
<span class="t" style="left:847.8px;top:251.2px;font-size:11px;color:#4f98e6">00:00:00.00</span>
<span class="t" style="left:913px;top:251.2px;font-size:11px;color:#c8c8c8">/</span>
<span class="t" style="left:924px;top:251.2px;font-size:11px;color:#c8c8c8">00:00:04.10</span>


<!-- LOWER (toolbar + timeline) -->
<div id="lower" class="abs"></div>

<div class="abs" style="left:1px;top:279px;width:997px;height:1px;background:repeating-linear-gradient(90deg,#000 0 2px,#1e1e1e 2px 4px)"></div>
<div class="sep" style="left:130.5px"></div><div class="sep" style="left:252.5px"></div><div class="sep" style="left:517.5px"></div>
<svg class="abs" style="left:50px;top:286px" width="950" height="28" viewBox="50 286 950 28">
 <g class="ic" style="stroke-width:1.25">
  <!-- undo -->
  <path d="M61.9 292.2L55.7 297.1L61.9 302V299.5Q70.4 300 72.2 307.6L73.2 307.6Q72.6 295.6 61.9 294.9Z"/>
  <!-- redo dim -->
  <g class="dim"><path d="M100.6 292.2L106.8 297.1L100.6 302V299.5Q92.1 300 90.3 307.6L89.3 307.6Q89.9 295.6 100.6 294.9Z"/></g>
  <!-- pencil -->
  <path d="M150.4 307.4l1.2 -5l10.2 -10.2q1.4 -1.2 2.8 .2l1 1q1.2 1.4 0 2.8l-10.2 10.2z"/><path d="M160.2 293.8l3.8 3.8"/><path d="M151.6 302.4l3.8 3.8"/>
  <!-- scissors dim -->
  <g class="dim"><circle cx="183.8" cy="304.6" r="2.6"/><circle cx="192.8" cy="304.6" r="2.6"/><path d="M185.2 302.4l6.2 -10"/><path d="M191.4 302.4l-6.2 -10"/></g>
  <!-- trash -->
  <path d="M212.4 295.6h15"/><path d="M217 295.4v-2.2q0 -.8 .8 -.8h4.2q.8 0 .8 .8v2.2"/><path d="M214 295.8v10.2q0 1.6 1.6 1.6h8.6q1.6 0 1.6 -1.6v-10.2"/><path d="M217.4 298.6v6M219.9 298.6v6M222.4 298.6v6"/>
  <!-- crop -->
  <path d="M275 291.6v13.8h14.6"/><path d="M271.2 293.8h14.8v15.2"/><path d="M275.6 305l11.8 -13"/>
  <!-- add mosaic -->
  <path d="M309.4 293.5h7.6M307 295.6v8.8M309 306.5h10M321 297.6v6.8"/><path d="M314 295.9v6.8M310.6 299.3h6.8"/>
  <rect x="305.8" y="292.3" width="2.5" height="2.5"/><rect x="319.7" y="292.3" width="2.5" height="2.5"/><circle cx="307" cy="306.5" r="1.5"/><circle cx="321" cy="306.5" r="1.5"/>
  <!-- mosaic cross -->
  <path d="M343.5 292.5h5.9v4h2.85v-4h5.9v4h5v6.25h-5v4.75h-5.9v-4.75h-2.85v4.75h-5.9v-4.75h-5v-6.25h5z"/>
  <path d="M343.5 296.5h5.9v6.25h-5.9zM352.25 296.5h5.9v6.25h-5.9z"/>
  <!-- dim rect -->
  <g class="dim"><path d="M399 296.4v-2.2q0 -1.8 -1.8 -1.8h-16.8q-1.8 0 -1.8 1.8v11q0 1.8 1.8 1.8h16.8q1.8 0 1.8 -1.8v-2.2"/><rect x="384" y="296" width="10.4" height="7.4" rx="1"/></g>
  <!-- clock -->
  <path d="M429.6 293.2a8.4 8.4 0 1 0 2.6 4.4"/><path d="M423.6 295v5h4.6"/>
  <!-- mic -->
  <rect x="451.4" y="291.6" width="5.6" height="10.6" rx="2.8"/><path d="M448.6 299.4v1.4q0 4 5.6 4.2q5.6 -.2 5.6 -4.2v-1.4"/><path d="M454.2 305.2v3.6M451 308.9h6.4"/>
  <!-- screen person -->
  <path d="M476.4 291.8h19.6"/><path d="M478 292v12.4h16.4v-12.4"/><circle cx="486.2" cy="296.4" r="2.2"/><path d="M481.8 304q.4 -4.4 4.4 -4.6q4 .2 4.4 4.6"/><path d="M486.2 304.6v3.2M482.6 308h7.2"/>
  <!-- shield dim -->
  <g class="dim" style="stroke:#484848"><path d="M767.2 294h9.6v8.2l-4.8 3.6l-4.8 -3.6z"/></g>
  <!-- fit -->
  <rect x="796" y="294" width="15.8" height="11.6" rx="2"/><path d="M798.6 299.8h10.6M801 297.6l-2.4 2.2l2.4 2.2M806.8 297.6l2.4 2.2l-2.4 2.2"/>
  <!-- zoom out -->
  <path d="M838.6 292a6.6 6.6 0 1 0 2.4 2.6"/><path d="M831.6 298.2h6.4"/><path d="M839.4 303l2.8 2.8"/>
  <!-- partial right -->
  <path d="M990.6 293.4q-6 6 0 12"/>
 </g>
 <path d="M854.5 299.6H937" stroke="#9a9a9a" stroke-width="1.4"/>
 <path d="M942 299.6H974" stroke="#3c3c3c" stroke-width="1" stroke-dasharray="2 1"/>
 <circle cx="938" cy="299.6" r="3.7" fill="#cfcfcf"/>
</svg>
<span class="t" style="left:545px;top:293.3px;font-size:11.7px;color:#a2923c">Speech&amp;Text Converter</span>
<div class="abs" style="left:690px;top:289.3px;width:64.5px;height:20.8px;border-radius:4.5px;background:#1a72e6"></div>
<span class="t" style="left:705.3px;top:293.5px;font-size:12px;color:#fff;letter-spacing:-.1px;text-shadow:.3px 0 0 #fff">Export</span>


<!-- ruler -->
<div class="abs" style="left:1px;top:348px;width:89px;height:1px;background:repeating-linear-gradient(90deg,#000 0 2px,#1e1e1e 2px 4px)"></div>
<svg class="abs" style="left:0;top:320px" width="1000" height="303" viewBox="0 320 1000 303">
 <rect x="89.5" y="347.3" width="894.7" height="1.5" fill="#8c8c8c"/>
 <rect x="89.20" y="339.8" width="1" height="7.6" fill="#8c8c8c"/><rect x="103.55" y="344.4" width="1" height="3" fill="#8c8c8c"/><rect x="117.90" y="344.4" width="1" height="3" fill="#8c8c8c"/><rect x="132.25" y="344.4" width="1" height="3" fill="#8c8c8c"/><rect x="146.60" y="344.4" width="1" height="3" fill="#8c8c8c"/><rect x="160.95" y="342.8" width="1" height="4.6" fill="#8c8c8c"/><rect x="175.30" y="344.4" width="1" height="3" fill="#8c8c8c"/><rect x="189.65" y="344.4" width="1" height="3" fill="#8c8c8c"/><rect x="204.00" y="344.4" width="1" height="3" fill="#8c8c8c"/><rect x="218.35" y="344.4" width="1" height="3" fill="#8c8c8c"/><rect x="232.70" y="339.8" width="1" height="7.6" fill="#8c8c8c"/><rect x="247.05" y="344.4" width="1" height="3" fill="#8c8c8c"/><rect x="261.40" y="344.4" width="1" height="3" fill="#8c8c8c"/><rect x="275.75" y="344.4" width="1" height="3" fill="#8c8c8c"/><rect x="290.10" y="344.4" width="1" height="3" fill="#8c8c8c"/><rect x="304.45" y="342.8" width="1" height="4.6" fill="#8c8c8c"/><rect x="318.80" y="344.4" width="1" height="3" fill="#8c8c8c"/><rect x="333.15" y="344.4" width="1" height="3" fill="#8c8c8c"/><rect x="347.50" y="344.4" width="1" height="3" fill="#8c8c8c"/><rect x="361.85" y="344.4" width="1" height="3" fill="#8c8c8c"/><rect x="376.20" y="339.8" width="1" height="7.6" fill="#8c8c8c"/><rect x="390.55" y="344.4" width="1" height="3" fill="#8c8c8c"/><rect x="404.90" y="344.4" width="1" height="3" fill="#8c8c8c"/><rect x="419.25" y="344.4" width="1" height="3" fill="#8c8c8c"/><rect x="433.60" y="344.4" width="1" height="3" fill="#8c8c8c"/><rect x="447.95" y="342.8" width="1" height="4.6" fill="#8c8c8c"/><rect x="462.30" y="344.4" width="1" height="3" fill="#8c8c8c"/><rect x="476.65" y="344.4" width="1" height="3" fill="#8c8c8c"/><rect x="491.00" y="344.4" width="1" height="3" fill="#8c8c8c"/><rect x="505.35" y="344.4" width="1" height="3" fill="#8c8c8c"/><rect x="519.70" y="339.8" width="1" height="7.6" fill="#8c8c8c"/><rect x="534.05" y="344.4" width="1" height="3" fill="#8c8c8c"/><rect x="548.40" y="344.4" width="1" height="3" fill="#8c8c8c"/><rect x="562.75" y="344.4" width="1" height="3" fill="#8c8c8c"/><rect x="577.10" y="344.4" width="1" height="3" fill="#8c8c8c"/><rect x="591.45" y="342.8" width="1" height="4.6" fill="#8c8c8c"/><rect x="605.80" y="344.4" width="1" height="3" fill="#8c8c8c"/><rect x="620.15" y="344.4" width="1" height="3" fill="#8c8c8c"/><rect x="634.50" y="344.4" width="1" height="3" fill="#8c8c8c"/><rect x="648.85" y="344.4" width="1" height="3" fill="#8c8c8c"/><rect x="663.20" y="339.8" width="1" height="7.6" fill="#8c8c8c"/><rect x="677.55" y="344.4" width="1" height="3" fill="#8c8c8c"/><rect x="691.90" y="344.4" width="1" height="3" fill="#8c8c8c"/><rect x="706.25" y="344.4" width="1" height="3" fill="#8c8c8c"/><rect x="720.60" y="344.4" width="1" height="3" fill="#8c8c8c"/><rect x="734.95" y="342.8" width="1" height="4.6" fill="#8c8c8c"/><rect x="749.30" y="344.4" width="1" height="3" fill="#8c8c8c"/><rect x="763.65" y="344.4" width="1" height="3" fill="#8c8c8c"/><rect x="778.00" y="344.4" width="1" height="3" fill="#8c8c8c"/><rect x="792.35" y="344.4" width="1" height="3" fill="#8c8c8c"/><rect x="806.70" y="339.8" width="1" height="7.6" fill="#8c8c8c"/><rect x="821.05" y="344.4" width="1" height="3" fill="#8c8c8c"/><rect x="835.40" y="344.4" width="1" height="3" fill="#8c8c8c"/><rect x="849.75" y="344.4" width="1" height="3" fill="#8c8c8c"/><rect x="864.10" y="344.4" width="1" height="3" fill="#8c8c8c"/><rect x="878.45" y="342.8" width="1" height="4.6" fill="#8c8c8c"/><rect x="892.80" y="344.4" width="1" height="3" fill="#8c8c8c"/><rect x="907.15" y="344.4" width="1" height="3" fill="#8c8c8c"/><rect x="921.50" y="344.4" width="1" height="3" fill="#8c8c8c"/><rect x="935.85" y="344.4" width="1" height="3" fill="#8c8c8c"/><rect x="950.20" y="339.8" width="1" height="7.6" fill="#8c8c8c"/><rect x="964.55" y="344.4" width="1" height="3" fill="#8c8c8c"/><rect x="978.90" y="344.4" width="1" height="3" fill="#8c8c8c"/>
 <!-- track backgrounds -->
 <path d="M1 432.95H984" stroke="#000" stroke-width="1.05" stroke-dasharray="2.2 .8"/>
 <path d="M1 482.15H984" stroke="#000" stroke-width="1.05" stroke-dasharray="2.2 .8"/>
 <path d="M1 518.05H984" stroke="#000" stroke-width="1.25"/>
 <path d="M1 553.10H984" stroke="#000" stroke-width="1.35"/>
 <path d="M1 589.55H984" stroke="#000" stroke-width="1.05"/>
 <rect x="90" y="518.7" width="894" height="33.7" fill="#2b3148"/>
 <!-- clip -->
 <defs><clipPath id="clipc"><rect x="91" y="351.6" width="318" height="78.4"/></clipPath></defs>
 <rect x="89.6" y="350.2" width="321" height="81.2" fill="#d2d232"/>
 <g clip-path="url(#clipc)" filter="url(#sat)">
  <g><use href="#scene-bg" x="91" y="351.6" width="139" height="78.4"/><use href="#man-body" x="91" y="351.6" width="139" height="78.4"/><use href="#head-b" x="91" y="351.6" width="139" height="78.4"/></g>
  <g><use href="#scene-bg" x="230" y="351.6" width="139" height="78.4"/><use href="#man-body" x="230" y="351.6" width="139" height="78.4"/><use href="#head-b" x="230" y="351.6" width="139" height="78.4"/></g>
  <g><use href="#scene-bg" x="369" y="351.6" width="139" height="78.4"/><use href="#man-body" x="369" y="351.6" width="139" height="78.4"/><use href="#head-b" x="369" y="351.6" width="139" height="78.4"/></g>
 </g>
 <!-- playhead -->
 <rect x="89" y="334" width="1" height="271" fill="#c8aa3c"/>
 <path d="M89.3 334h3.6v9.6l-2.6 3.4h-1z" fill="#f0d83a"/>
 <rect x="89.2" y="518" width="3.6" height="17" rx="1.8" fill="#5a5a5a"/>
 <!-- track icons -->
 <g class="ic" style="stroke-width:1.2;stroke:#c2c2c2">
  <path d="M10.4 383.2h14"/><rect x="8.2" y="385.6" width="18.4" height="13" rx="2"/><path d="M15 388.6v7l5.6 -3.5z"/>
  <path d="M26 456.6v-4.2q0 -1.8 -1.8 -1.8h-14.2q-1.8 0 -1.8 1.8v9.8q0 1.8 1.8 1.8h4.6"/><rect x="17" y="458.4" width="9.2" height="7" rx="1.6"/>
  <path d="M9.6 496.2v-3.4h14.8v3.4M15.6 492.8v14.4h2.8v-14.4M15 507.2h4"/>
  <path d="M15.2 541.4v-12.2h9.4v10.6M15.2 533h9.4"/><circle cx="13" cy="541.6" r="2.2"/><circle cx="22.4" cy="540" r="2.2"/>
  <path d="M15.2 577.4v-12.2h9.4v10.6M15.2 569h9.4"/><circle cx="13" cy="577.6" r="2.2"/><circle cx="22.4" cy="576" r="2.2"/>
  <path d="M14.4 604.6v-3q0 -1.6 1.6 -1.6h3q1.6 0 1.6 1.6v3"/>
 </g>
 <rect x="31" y="602.6" width="2" height="1.6" fill="#9a9a9a"/><rect x="35" y="603.2" width="2.4" height="1" fill="#9a9a9a"/><rect x="39.6" y="602.4" width="1.4" height="1.8" fill="#9a9a9a"/><rect x="43" y="603.2" width="1.6" height="1" fill="#9a9a9a"/>
 <path d="M80 382.8h2l2.6 -2.2v7l-2.6 -2.2h-2z" fill="#bdbdbd"/><path d="M85.8 382.20000000000005q2 1.9 0 3.8" fill="none" stroke="#bdbdbd" stroke-width="1.1"/><rect x="80" y="397.8" width="6.6" height="4.8" rx=".6" fill="#bdbdbd"/><rect x="82.6" y="399.20000000000005" width="1.4" height="2" fill="#1e1e1e"/><path d="M82.2 397.8v-1.2q0 -1.7 1.8 -1.7q1.8 0 1.8 1.5" fill="none" stroke="#bdbdbd" stroke-width="1.1"/>
 <rect x="80" y="463.2" width="6.6" height="4.8" rx=".6" fill="#bdbdbd"/><rect x="82.6" y="464.6" width="1.4" height="2" fill="#1e1e1e"/><path d="M82.2 463.2v-1.2q0 -1.7 1.8 -1.7q1.8 0 1.8 1.5" fill="none" stroke="#bdbdbd" stroke-width="1.1"/>
 <rect x="80" y="505.8" width="6.6" height="4.8" rx=".6" fill="#bdbdbd"/><rect x="82.6" y="507.20000000000005" width="1.4" height="2" fill="#1e1e1e"/><path d="M82.2 505.8v-1.2q0 -1.7 1.8 -1.7q1.8 0 1.8 1.5" fill="none" stroke="#bdbdbd" stroke-width="1.1"/>
 <path d="M80 527.8000000000001h2l2.6 -2.2v7l-2.6 -2.2h-2z" fill="#bdbdbd"/><path d="M85.8 527.2q2 1.9 0 3.8" fill="none" stroke="#bdbdbd" stroke-width="1.1"/><rect x="80" y="541.4000000000001" width="6.6" height="4.8" rx=".6" fill="#bdbdbd"/><rect x="82.6" y="542.8000000000001" width="1.4" height="2" fill="#1e1e1e"/><path d="M82.2 541.4000000000001v-1.2q0 -1.7 1.8 -1.7q1.8 0 1.8 1.5" fill="none" stroke="#bdbdbd" stroke-width="1.1"/>
 <path d="M80 563.6h2l2.6 -2.2v7l-2.6 -2.2h-2z" fill="#bdbdbd"/><path d="M85.8 563.0q2 1.9 0 3.8" fill="none" stroke="#bdbdbd" stroke-width="1.1"/><rect x="80" y="577.8000000000001" width="6.6" height="4.8" rx=".6" fill="#bdbdbd"/><rect x="82.6" y="579.2" width="1.4" height="2" fill="#1e1e1e"/><path d="M82.2 577.8000000000001v-1.2q0 -1.7 1.8 -1.7q1.8 0 1.8 1.5" fill="none" stroke="#bdbdbd" stroke-width="1.1"/>
 <path d="M80 599.2h2l2.6 -2.2v7l-2.6 -2.2h-2z" fill="#bdbdbd"/><path d="M85.8 598.6q2 1.9 0 3.8" fill="none" stroke="#bdbdbd" stroke-width="1.1"/>
 <!-- scrollbars -->
 <rect x="986.6" y="360.6" width="5.4" height="216.4" rx="2.7" fill="#c8aa3e"/>
 <path d="M986.6 358l2.8 -5l2.8 5z" fill="#8a8a8a"/>
 <path d="M986.8 597l2.7 4.8l2.7 -4.8z" fill="#7a7a7a"/>
 <path d="M974.6 607.8l4.6 2.6l-4.6 2.6z" fill="#5c5c5c"/>
 <path d="M94.6 610.6l4.4 -2.6v5.2z" fill="#5c5c5c"/>
 <rect x="103" y="608" width="24.6" height="5" rx="2.5" fill="#97883a"/>
 <!-- resize grip -->
 <g fill="#e8e8e8"><rect x="996" y="611.6" width="1.3" height="1.3"/><rect x="993.6" y="614" width="1.3" height="1.3"/><rect x="996" y="614" width="1.3" height="1.3"/><rect x="991.2" y="616.4" width="1.3" height="1.3"/><rect x="993.6" y="616.4" width="1.3" height="1.3"/><rect x="996" y="616.4" width="1.3" height="1.3"/><rect x="988.8" y="618.8" width="1.3" height="1.3"/><rect x="991.2" y="618.8" width="1.3" height="1.3"/><rect x="993.6" y="618.8" width="1.3" height="1.3"/><rect x="996" y="618.8" width="1.3" height="1.3"/></g>
</svg>
<div class="abs" style="left:0;top:320px;width:984px;height:20px;overflow:hidden"><span class="t" style="left:89.7px;top:5px;font-size:9.4px;color:#c0c0c0">00:00:00.00</span><span class="t" style="left:233.2px;top:5px;font-size:9.4px;color:#c0c0c0">00:00:02.00</span><span class="t" style="left:376.7px;top:5px;font-size:9.4px;color:#c0c0c0">00:00:04.00</span><span class="t" style="left:520.2px;top:5px;font-size:9.4px;color:#c0c0c0">00:00:06.00</span><span class="t" style="left:663.7px;top:5px;font-size:9.4px;color:#c0c0c0">00:00:08.00</span><span class="t" style="left:807.2px;top:5px;font-size:9.4px;color:#c0c0c0">00:00:10.00</span><span class="t" style="left:950.7px;top:5px;font-size:9.4px;color:#c0c0c0">00:00:12.00</span></div>
<span class="t" style="left:94.4px;top:353px;font-size:11.4px;color:#fff;text-shadow:0 0 1px rgba(0,0,0,.35)">sample (2).mov</span>
<span class="t lbl" style="left:30.8px;top:386.4px">Video</span>
<span class="t lbl" style="left:31px;top:453.5px;letter-spacing:-.7px">PIP</span>
<span class="t lbl" style="left:31px;top:495.2px">Text</span>
<span class="t lbl" style="left:31px;top:531.2px">Audio</span>
<span class="t lbl" style="left:31px;top:567.2px">Audio</span>
<span class="t" style="left:94.5px;top:531px;font-size:11.4px;color:#4a92e4">20211022_170955.mov</span>

</body>
</html>
